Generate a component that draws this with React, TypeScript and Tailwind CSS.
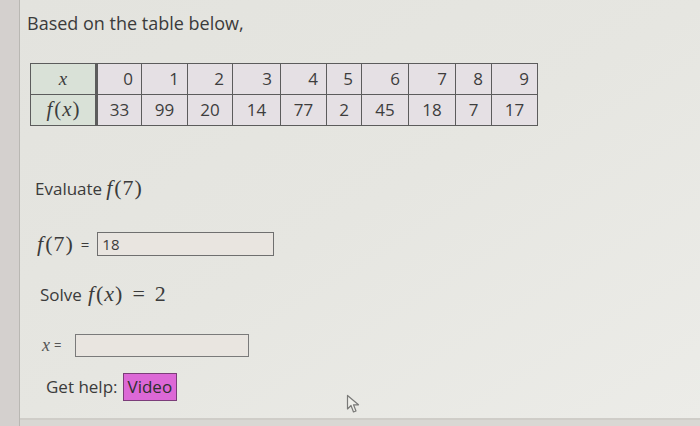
const xs = ['0', '1', '2', '3', '4', '5', '6', '7', '8', '9'];
const fs = ['33', '99', '20', '14', '77', '2', '45', '18', '7', '17'];
const widths = ['w-[45px]', 'w-[46px]', 'w-[45px]', 'w-[48px]', 'w-[46px]', 'w-[35px]', 'w-[47px]', 'w-[47px]', 'w-[36px]', 'w-[46px]'];

const math = "font-['Liberation_Serif',serif] italic";
const roman = "font-['Liberation_Serif',serif]";

function Cursor() {
  return (
    <svg className="absolute left-[346px] top-[394px]" width="18" height="20" viewBox="0 0 18 20">
      <path d="M1.5 1.5 L1.5 15 L5 11.5 L7.5 18 L10 17 L7.5 10.8 L12.5 10.8 Z" fill="#efefea" stroke="#7a7a78" strokeWidth="1.2" strokeLinejoin="round" />
    </svg>
  );
}

function F({ arg, size }: { arg: string; size: string }) {
  const isVar = arg === 'x';
  return (
    <span className={`${size} leading-[24px] inline-flex items-baseline`}>
      <span className={`${math} mr-[2px]`}>f</span>
      <span className={roman}>(</span>
      <span className={`${isVar ? math : roman} px-[1px]`}>{arg}</span>
      <span className={roman}>)</span>
    </span>
  );
}

export default function App() {
  return (
    <div className="relative flex w-[700px] h-[426px] bg-[#d9d7d3] font-['Open_Sans','Liberation_Sans',sans-serif] text-[#3b3b3b] overflow-hidden">
      <div className="w-[20px] bg-[#d4d0ce] border-r border-[#b9b7b3]" />
      <div className="flex-1 h-[420px] border-b-2 border-[#cfcdc8] bg-gradient-to-br from-[#e3e3de] via-[#e6e6e1] to-[#ecece8] flex flex-col items-start">
        <p className="mt-[12px] ml-[7px] text-[18px] leading-[22px]">Based on the table below,</p>

        <table className="mt-[29px] ml-[10px] border-collapse table-fixed text-[17px] text-[#3d3d3d]">
          <tbody>
            <tr className="h-[31px]">
              <td className={`w-[66px] bg-[#d9e1d7] border border-[#5c5c5c] border-r-[3px] text-center text-[19px] ${math}`}>x</td>
              {xs.map((v, i) => (
                <td key={i} className={`${widths[i]} bg-[#e5e0e4] border border-[#5c5c5c] text-right pr-[8px]`}>{v}</td>
              ))}
            </tr>
            <tr className="h-[31px]">
              <td className="bg-[#d9e1d7] border border-[#5c5c5c] border-r-[3px] text-center">
                <F arg="x" size="text-[21px]" />
              </td>
              {fs.map((v, i) => (
                <td key={i} className="bg-[#e5e0e4] border border-[#5c5c5c] text-center">{v}</td>
              ))}
            </tr>
          </tbody>
        </table>

        <p className="mt-[50px] ml-[15px] text-[17px] leading-[24px] h-[24px] flex items-baseline">
          <span className="mr-[4px]">Evaluate</span>
          <F arg="7" size="text-[22px]" />
        </p>

        <div className="mt-[32px] ml-[17px] flex items-center h-[24px] text-[17px]">
          <F arg="7" size="text-[22px]" />
          <span className="ml-[8px] text-[15px]">=</span>
          <div className="ml-[8px] w-[177px] h-[24px] bg-[#e9e5e0] border border-[#6f6f6f] flex items-center pl-[4px] text-[15px]">18</div>
        </div>

        <p className="mt-[26px] ml-[20px] text-[17px] leading-[24px] h-[24px] flex items-baseline">
          <span className="mr-[6px]">Solve</span>
          <F arg="x" size="text-[22px]" />
          <span className={`${roman} text-[22px] leading-[24px] mx-[10px]`}>=</span>
          <span className={`${roman} text-[22px] leading-[24px]`}>2</span>
        </p>

        <div className="mt-[28px] ml-[22px] flex items-center h-[23px]">
          <span className={`${math} text-[18px] text-[#555]`}>x</span>
          <span className="ml-[4px] text-[13px] text-[#555]">=</span>
          <div className="ml-[14px] w-[174px] h-[23px] bg-[#e9e5e0] border border-[#7a7a7a]" />
        </div>

        <div className="mt-[16px] ml-[26px] flex items-center text-[17px]">
          <span>Get help:</span>
          <span className="ml-[5px] h-[28px] px-[4px] flex items-center bg-[#dc68d6] border border-[#7b3d79] text-[#2f2f2f]">Video</span>
        </div>
      </div>
      <Cursor />
    </div>
  );
}
